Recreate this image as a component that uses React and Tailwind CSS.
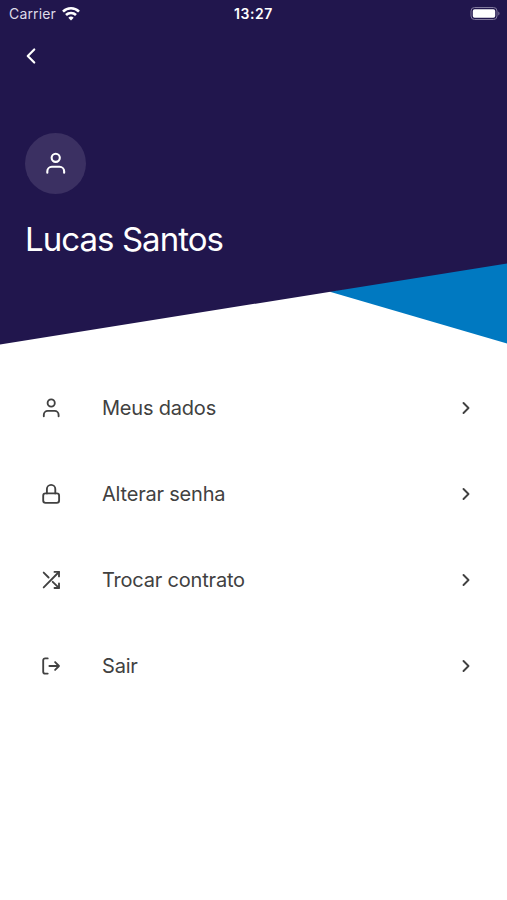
import React from "react";
import { FiChevronRight, FiChevronLeft } from "react-icons/fi";

function Glyph({ className, children }) {
  return (
    <svg
      className={className}
      viewBox="0.3 0 22 22"
      fill="none"
      stroke="currentColor"
      strokeWidth="1.85"
      strokeLinecap="round"
      strokeLinejoin="round"
    >
      {children}
    </svg>
  );
}

function UserIcon({ className }) {
  return (
    <Glyph className={className}>
      <circle cx="11.5" cy="6" r="3.6" />
      <path d="M4.1 19.2v-1.3a4 4 0 0 1 4-4h6.8a4 4 0 0 1 4 4v1.3" />
    </Glyph>
  );
}

function LockIcon({ className }) {
  return (
    <Glyph className={className}>
      <rect x="3.5" y="10.4" width="15.9" height="9.4" rx="2.3" />
      <path d="M7.2 10.4V6a4.2 4.2 0 0 1 8.4 0v4.4" />
    </Glyph>
  );
}

function ShuffleIcon({ className }) {
  return (
    <Glyph className={className}>
      <path d="M4 18.4 19.2 3M4 3.6l4.9 4.9M13 12.8l6.2 6" />
      <path d="M14.8 2.9h4.5v4.5M19.3 14.5V19h-4.5" />
    </Glyph>
  );
}

function LogOutIcon({ className }) {
  return (
    <Glyph className={className}>
      <path d="M8 3.4H5.4a1.9 1.9 0 0 0-1.9 1.9v11.4a1.9 1.9 0 0 0 1.9 1.9H8" />
      <path d="M9.7 11h9.6M15.4 7.1l3.9 3.9-3.9 3.9" />
    </Glyph>
  );
}

const items = [
  { label: "Meus dados", Icon: UserIcon },
  { label: "Alterar senha", Icon: LockIcon },
  { label: "Trocar contrato", Icon: ShuffleIcon },
  { label: "Sair", Icon: LogOutIcon },
];

function StatusBar() {
  return (
    <div className="grid h-7 grid-cols-3 items-center pr-[7px] pl-[9px] text-white">
      <div className="flex items-center gap-[6px]">
        <span className="text-[14px] leading-7 tracking-[0.15px] text-[#dedbe8]">Carrier</span>
        <svg className="h-[14px] w-[18px]" viewBox="0 0 18 14" fill="none" stroke="currentColor" strokeWidth="2.6">
          <path d="M1 4.6a11.4 11.4 0 0 1 16 0" />
          <path d="M4 8a7.1 7.1 0 0 1 10 0" />
          <path d="M9 13.4 6.3 10.7a3.9 3.9 0 0 1 5.4 0z" fill="currentColor" stroke="none" />
        </svg>
      </div>
      <span className="-ml-[2px] text-center text-[14px] leading-7 font-semibold tracking-[0.6px]">13:27</span>
      <svg className="h-[14px] w-[30px] justify-self-end" viewBox="0 0 30 14">
        <rect x="1" y="0.5" width="26" height="12" rx="3.5" fill="none" stroke="#81799d" />
        <rect x="2.8" y="2.3" width="22.4" height="8.4" rx="1.8" fill="#fff" />
        <path d="M28.3 4.5c1.6.7 1.6 3.3 0 4z" fill="#81799d" />
      </svg>
    </div>
  );
}

export default function App() {
  return (
    <main className="h-[900px] w-[507px] overflow-hidden bg-white font-['Inter',sans-serif]">
      <header className="relative h-[345px]">
        <svg className="absolute inset-0 h-[345px] w-[507px]" viewBox="0 0 507 345">
          <path d="M329 291.5 507 260v83.5z" fill="#0079c1" />
          <path d="M0 0h507v263.5L0 344.5z" fill="#21164d" />
        </svg>
        <div className="relative">
          <StatusBar />
          <button aria-label="Voltar" className="mt-[15px] ml-[18px] block text-white">
            <FiChevronLeft className="size-[26px]" />
          </button>
          <div className="mt-16 ml-[25px] flex size-[61px] items-center justify-center rounded-full bg-[#3b3062] text-white">
            <UserIcon className="size-[25px]" />
          </div>
          <h1 className="mt-[25px] ml-[25px] text-[33px] leading-10 tracking-[-0.95px] whitespace-nowrap text-white">
            Lucas Santos
          </h1>
        </div>
      </header>
      <nav className="mt-5">
        {items.map(({ label, Icon }) => (
          <a key={label} className="flex h-[86px] items-center pr-[31px] pl-10 text-[#414141]">
            <Icon className="size-[22px]" />
            <span className="ml-10 flex-1 text-[20px] leading-6 tracking-[-0.2px]">{label}</span>
            <FiChevronRight className="size-5 stroke-[2.3]" />
          </a>
        ))}
      </nav>
    </main>
  );
}
